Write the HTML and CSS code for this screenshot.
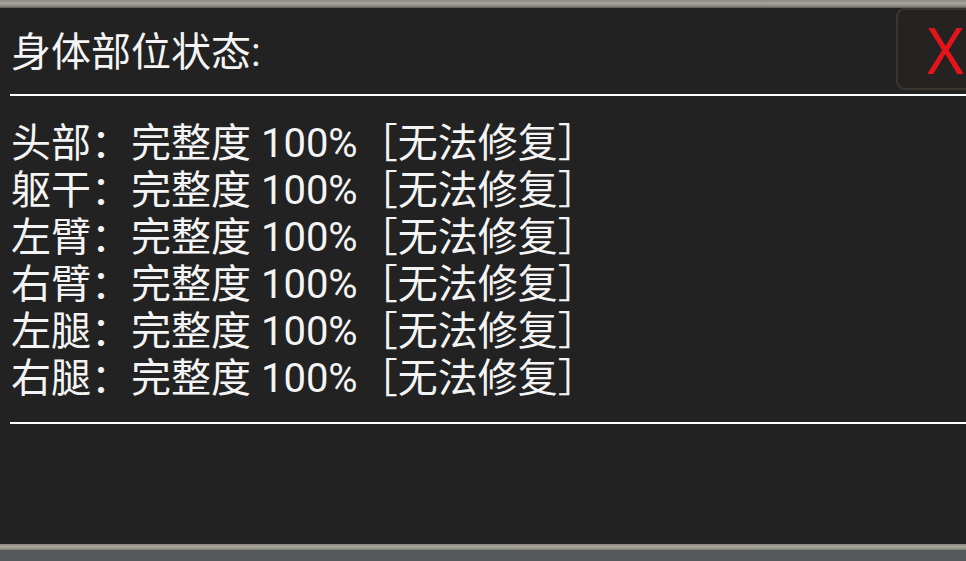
FILE: index.html
```html
<!DOCTYPE html>
<html lang="zh">
<head>
    <meta charset="UTF-8">
    <title>身体部位状态</title>
    <link rel="stylesheet" href="styles.css">
</head>
<body>
<div class="frame-top"></div>
<div class="panel">
    <!--标题栏-->
    <div class="header">
        <div class="title">身体部位状态:</div>
        <a href="#" class="close">X</a>
    </div>
    <div class="rule"></div>
    <!--部位列表-->
    <ul class="parts">
        <li>头部：完整度 100%［无法修复］</li>
        <li>躯干：完整度 100%［无法修复］</li>
        <li>左臂：完整度 100%［无法修复］</li>
        <li>右臂：完整度 100%［无法修复］</li>
        <li>左腿：完整度 100%［无法修复］</li>
        <li>右腿：完整度 100%［无法修复］</li>
    </ul>
    <div class="rule rule-bottom"></div>
</div>
<div class="frame-bottom"></div>
</body>
</html>
```

FILE: styles.css
```css
html, body{
    margin: 0;
    padding: 0;
}
body{
    width: 966px;
    height: 561px;
    overflow: hidden;
    background-color: #555959;
    font-family: Roboto, "Noto Sans CJK SC", sans-serif;
    color: #f4f4f4;
}
.frame-top{
    height: 8px;
    background: linear-gradient(#8a8884, #a6a49c 40%, #8c8a86 75%, #5a5956);
}
.panel{
    height: 536px;
    background-color: #222222;
}
.header{
    display: flex;
    align-items: flex-start;
    justify-content: space-between;
    height: 86px;
    padding-left: 11px;
}
.title{
    font-size: 40px;
    line-height: 47px;
    margin-top: 21px;
}
.close{
    display: flex;
    align-items: center;
    box-sizing: border-box;
    width: 86px;
    height: 82px;
    margin-right: -16px;
    padding-left: 29px;
    border: 2px solid #3b352f;
    border-radius: 9px;
    background-color: #242322;
    color: #e4141a;
    font-family: "Noto Sans", sans-serif;
    font-size: 63px;
    line-height: 1;
    text-decoration: none;
}
.rule{
    height: 2px;
    margin-left: 10px;
    background-color: #ffffff;
}
.parts{
    margin: 0;
    padding: 24px 0 0 11px;
}
.parts li{
    list-style-type: none;
    font-size: 40px;
    line-height: 47px;
    white-space: nowrap;
}
.rule-bottom{
    margin-top: 20px;
}
.frame-bottom{
    height: 6px;
    background: linear-gradient(#8a8680, #a9a79c 50%, #7c7b76);
}
```
